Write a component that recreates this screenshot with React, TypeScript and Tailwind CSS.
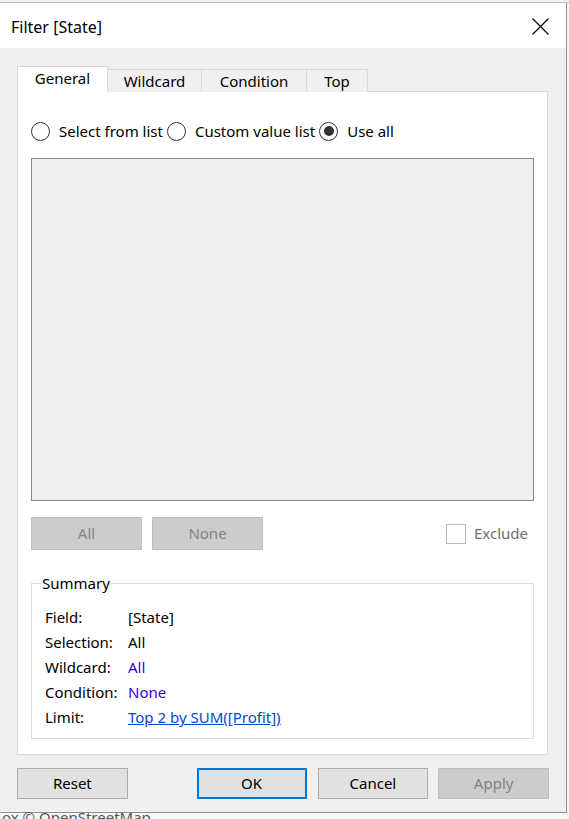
import React from 'react';

const font = { fontFamily: '"Noto Sans", "Open Sans", sans-serif' };

function Radio({ label, checked }: { label: string; checked?: boolean }) {
  return (
    <div className="flex items-center">
      <span className="w-[19px] h-[19px] rounded-full border border-[#333] bg-white flex items-center justify-center">
        {checked && <span className="w-[10px] h-[10px] rounded-full bg-[#333]" />}
      </span>
      <span className="ml-[9px] text-[15px] text-black">{label}</span>
    </div>
  );
}

function Row({ label, value, cls }: { label: string; value: string; cls: string }) {
  return (
    <div className="flex h-[25px] items-center">
      <span className="w-[83px] text-[15px] text-black">{label}</span>
      <span className={`text-[15px] ${cls}`}>{value}</span>
    </div>
  );
}

export default function App() {
  const tabs = ['Wildcard', 'Condition', 'Top'];
  const tabWidths = ['w-[94px]', 'w-[105px]', 'w-[61px]'];

  return (
    <div className="w-[569px] h-[819px] bg-[#f7f7f7] overflow-hidden" style={font}>
      {/* app behind the dialog */}
      <div className="h-[3px] bg-[#f3f3f3] border-b border-[#bdbdbd]" />
      <div className="w-[567px] h-[810px] flex flex-col border-r border-b border-[#8e8e8e] bg-[#f0f0f0]">
        {/* title bar */}
        <div className="h-[45px] bg-white flex items-center justify-between pl-[11px] pr-[17px] pt-[2px]">
          <span className="text-[16px] text-black">Filter [State]</span>
          <svg width="17" height="17" viewBox="0 0 17 17">
            <path d="M0.5 0.5 L16.5 16.5 M16.5 0.5 L0.5 16.5" stroke="#000" strokeWidth="1.1" />
          </svg>
        </div>

        <div className="flex-1 px-[17px] pt-[18px]">
          {/* tabs */}
          <div className="flex items-end h-[26px] relative z-10">
            <div className="w-[91px] h-[26px] bg-white border border-b-0 border-[#d9d9d9] flex items-center justify-center text-[15px] text-black pb-[3px]">
              General
            </div>
            {tabs.map((t, i) => (
              <div
                key={t}
                className={`${tabWidths[i]} h-[23px] bg-[#f0f0f0] border border-l-0 border-b-0 border-[#d9d9d9] flex items-center justify-center text-[15px] text-black`}
              >
                {t}
              </div>
            ))}
          </div>

          {/* panel */}
          <div className="w-[531px] h-[664px] -mt-px bg-white border border-[#d9d9d9] px-[13px] flex flex-col">
            <div className="flex items-center gap-[4px] mt-[29px] h-[20px]">
              <Radio label="Select from list" />
              <Radio label="Custom value list" />
              <Radio label="Use all" checked />
            </div>

            <div className="mt-[17px] w-[503px] h-[343px] bg-[#f0f0f0] border border-[#828790]" />

            <div className="mt-[16px] flex items-center h-[33px]">
              <div className="w-[111px] h-[33px] bg-[#cccccc] border border-[#bfbfbf] flex items-center justify-center text-[15px] text-[#838383]">
                All
              </div>
              <div className="ml-[10px] w-[111px] h-[33px] bg-[#cccccc] border border-[#bfbfbf] flex items-center justify-center text-[15px] text-[#838383]">
                None
              </div>
              <div className="ml-auto mr-[6px] flex items-center">
                <span className="w-[20px] h-[20px] border border-[#bcbcbc] bg-white" />
                <span className="ml-[8px] text-[15px] text-[#6d6d6d]">Exclude</span>
              </div>
            </div>

            {/* summary */}
            <fieldset className="mt-[25px] w-[503px] h-[164px] border border-[#dcdcdc] pt-[14px]">
              <legend className="ml-[9px] px-px text-[15px] text-black leading-[16px]">Summary</legend>
              <div className="pl-[13px]">
                <Row label="Field:" value="[State]" cls="text-black" />
                <Row label="Selection:" value="All" cls="text-black" />
                <Row label="Wildcard:" value="All" cls="text-[#2a00ff]" />
                <Row label="Condition:" value="None" cls="text-[#2a00ff]" />
                <Row label="Limit:" value="Top 2 by SUM([Profit])" cls="text-[#0645d8] underline" />
              </div>
            </fieldset>
          </div>

          {/* bottom buttons */}
          <div className="mt-[13px] flex items-center">
            <div className="w-[111px] h-[31px] bg-[#e1e1e1] border border-[#adadad] flex items-center justify-center text-[15px] text-black">
              Reset
            </div>
            <div className="ml-[69px] w-[110px] h-[31px] bg-[#e1e1e1] border-2 border-[#0078d7] flex items-center justify-center text-[15px] text-black">
              OK
            </div>
            <div className="ml-[11px] w-[111px] h-[31px] bg-[#e1e1e1] border border-[#adadad] flex items-center justify-center text-[15px] text-black">
              Cancel
            </div>
            <div className="ml-[10px] w-[111px] h-[31px] bg-[#cccccc] border border-[#bfbfbf] flex items-center justify-center text-[15px] text-[#838383]">
              Apply
            </div>
          </div>
        </div>
      </div>
      <div className="pl-[2px] -mt-[4px] text-[15px] text-[#555] leading-[16px]">ox © OpenStreetMap</div>
    </div>
  );
}
